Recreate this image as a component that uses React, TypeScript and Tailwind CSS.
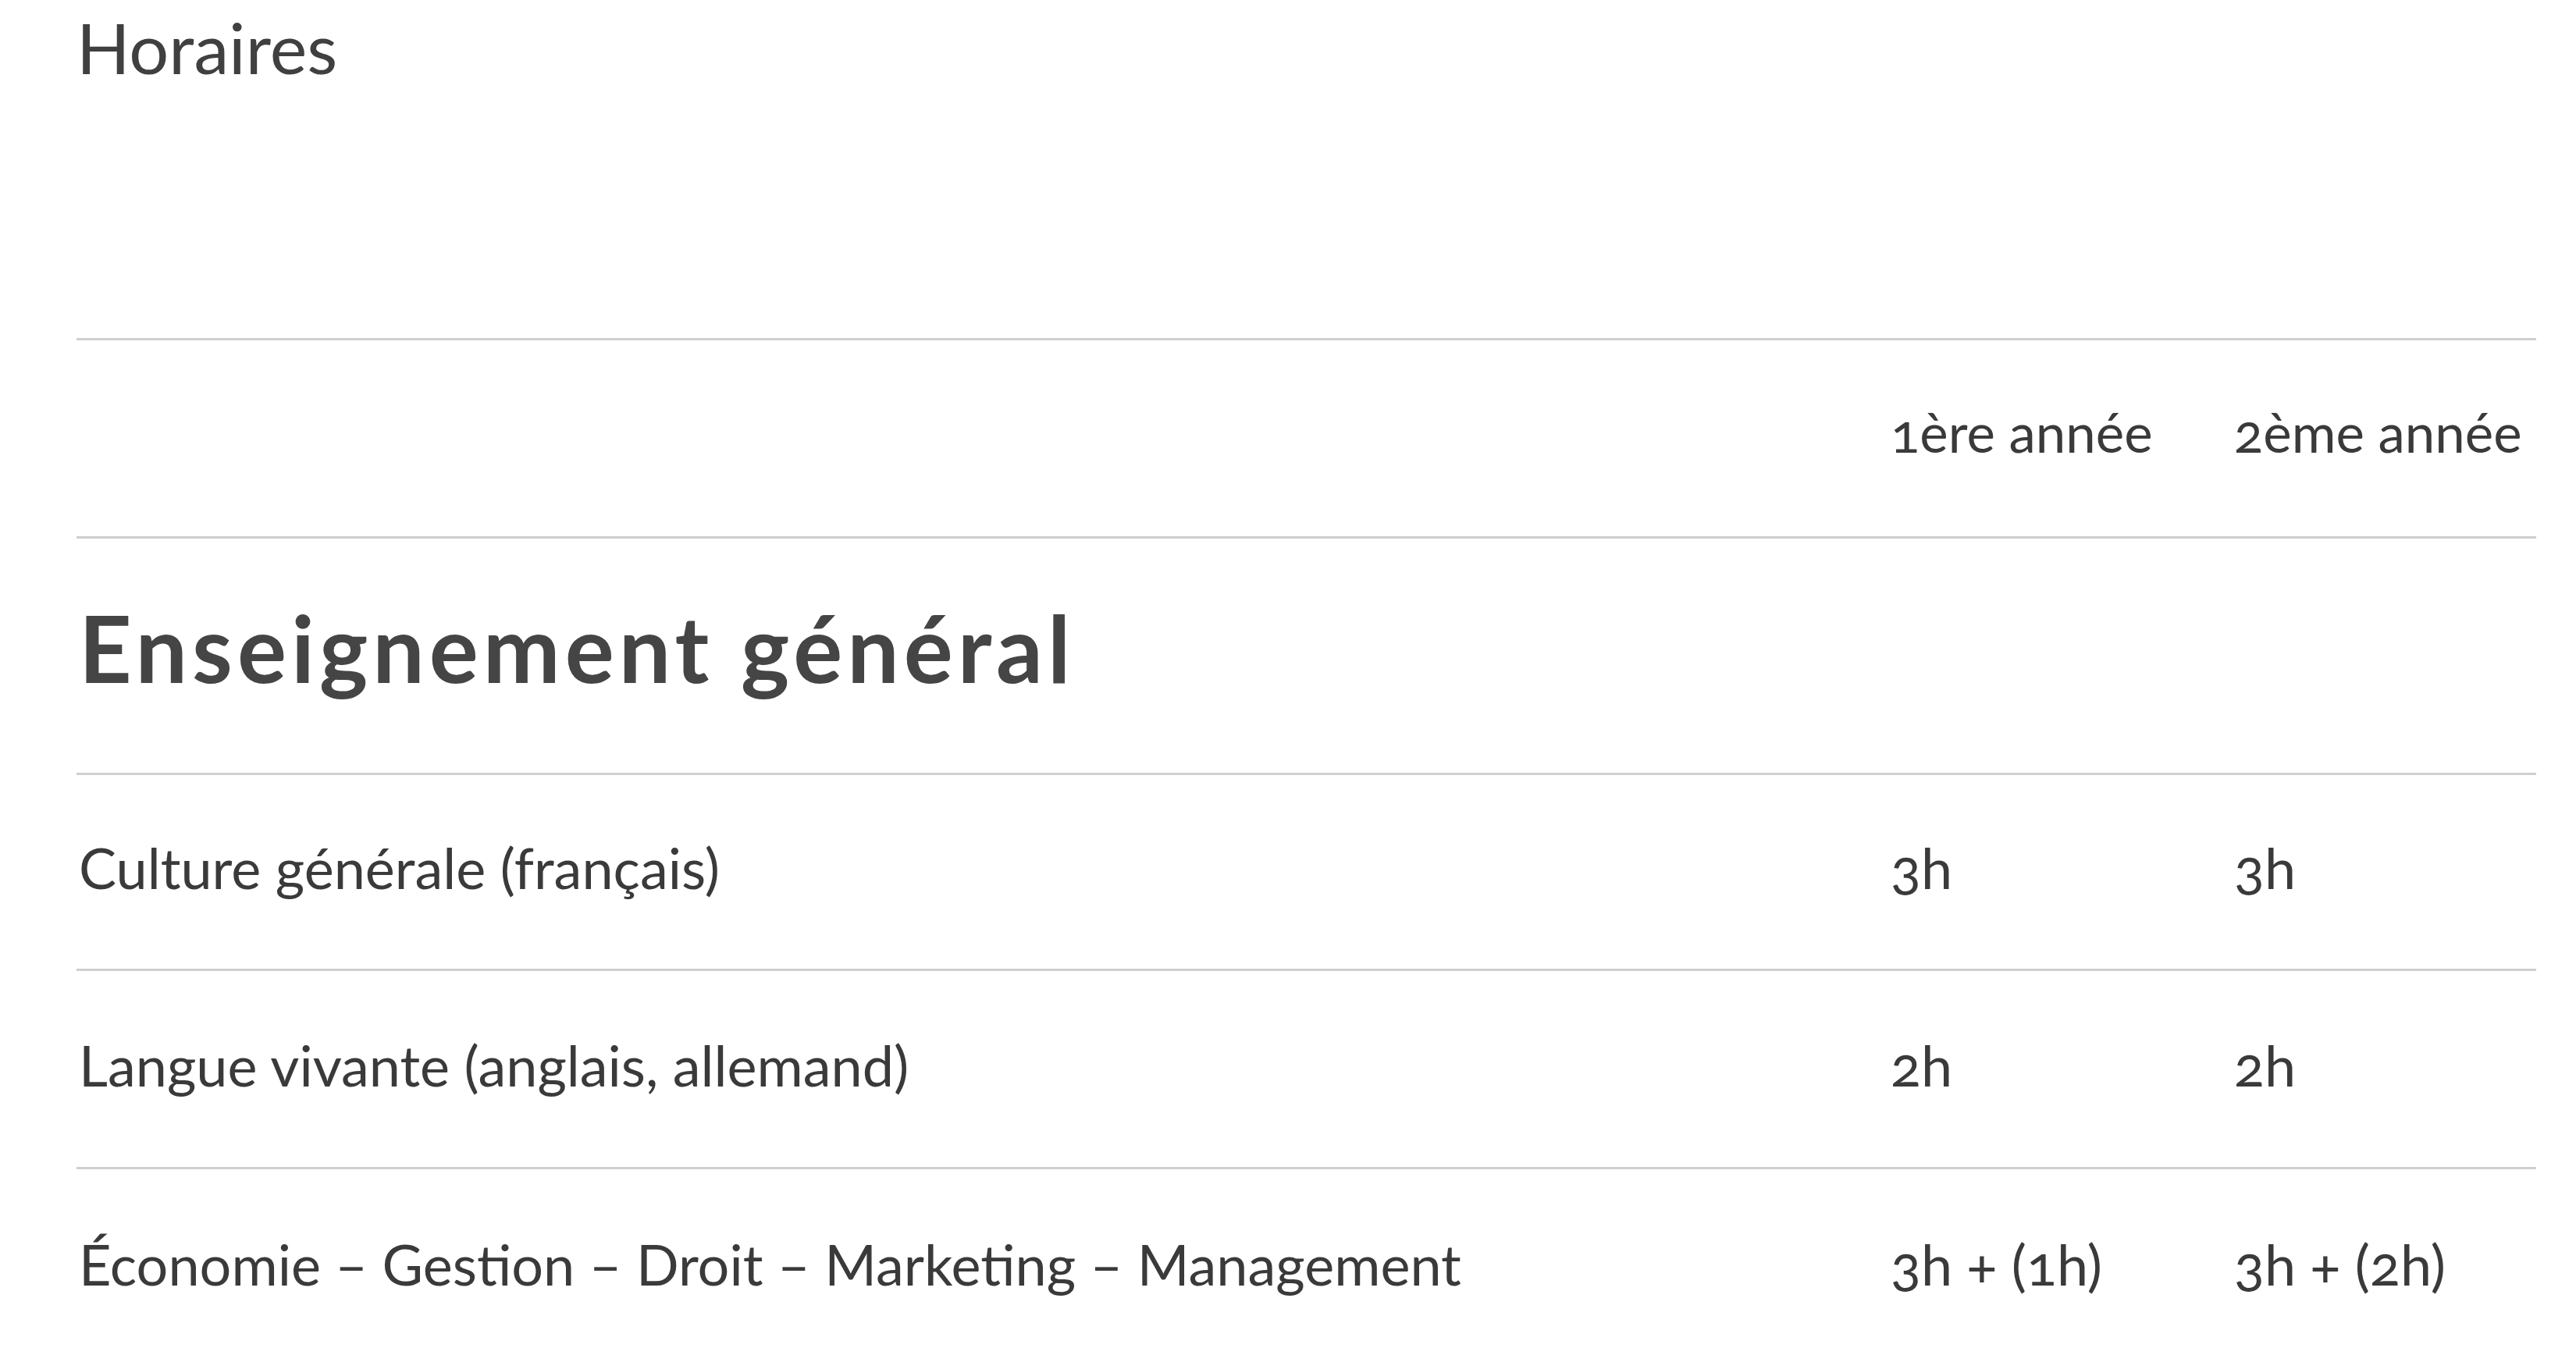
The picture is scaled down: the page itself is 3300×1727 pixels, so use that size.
const rows = [
  { label: 'Culture générale (français)', y1: '3h', y2: '3h', h: 'h-[251px]', pt: 'pt-[75px]' },
  { label: 'Langue vivante (anglais, allemand)', y1: '2h', y2: '2h', h: 'h-[254px]', pt: 'pt-[77px]' },
  { label: 'Économie – Gestion – Droit – Marketing – Management', y1: '3h + (1h)', y2: '3h + (2h)', h: 'h-[254px]', pt: 'pt-[78px]' },
];

export default function App() {
  return (
    <div className="min-h-screen bg-white pl-[98px] font-['Lato','Liberation_Sans',sans-serif] text-[#3a3a3a] oldstyle-nums">
      {/* Titre */}
      <h2 className="pt-[6px] text-[90px] leading-[1.2] font-normal text-[#404040]">Horaires</h2>

      {/* Tableau */}
      <div className="mt-[319px] w-[3151px]">
        {/* En-tête */}
        <div className="grid h-[254px] grid-cols-[2321px_440px_1fr] border-t-[3px] border-[#cfcfcf] pt-[77px] text-[69px] leading-[1.2]">
          <div />
          <div className="pl-[3px]">1ère année</div>
          <div className="pl-[3px]">2ème année</div>
        </div>

        {/* Section */}
        <div className="h-[303px] border-t-[3px] border-[#cfcfcf] pt-[69px] pl-[3px]">
          <h3 className="text-[118px] leading-[1.2] font-bold tracking-[6px] text-[#454545]">Enseignement général</h3>
        </div>

        {rows.map((row) => (
          <div
            key={row.label}
            className={`grid grid-cols-[2321px_440px_1fr] border-t-[3px] border-[#cfcfcf] text-[72px] leading-[1.2] ${row.h} ${row.pt}`}
          >
            <div className="pl-[3px]">{row.label}</div>
            <div className="pl-[3px]">{row.y1}</div>
            <div className="pl-[3px]">{row.y2}</div>
          </div>
        ))}
      </div>
    </div>
  );
}
